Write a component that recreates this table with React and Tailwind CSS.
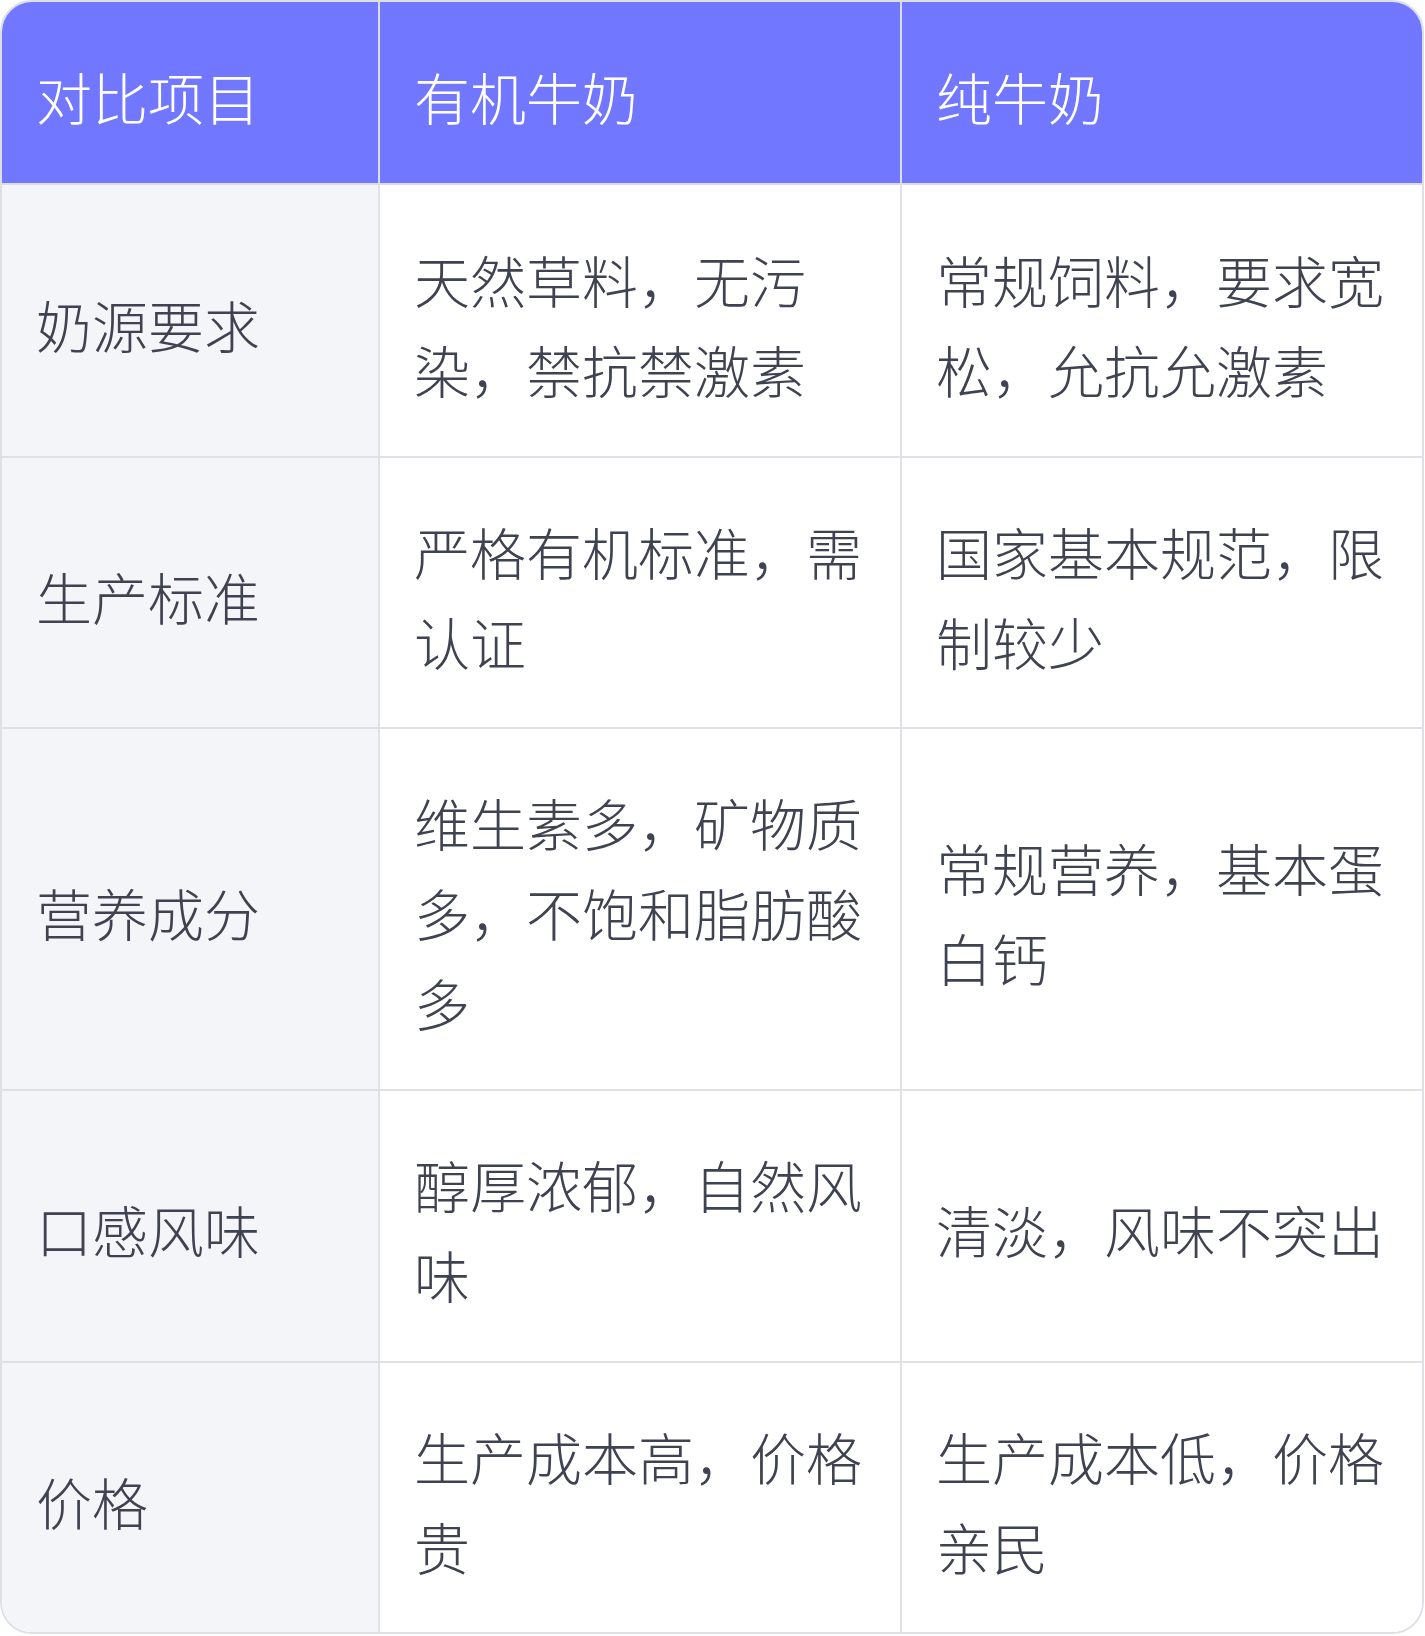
import React from "react";

const rows = [
  ["奶源要求", "天然草料，无污染，禁抗禁激素", "常规饲料，要求宽松，允抗允激素"],
  ["生产标准", "严格有机标准，需认证", "国家基本规范，限制较少"],
  ["营养成分", "维生素多，矿物质多，不饱和脂肪酸多", "常规营养，基本蛋白钙"],
  ["口感风味", "醇厚浓郁，自然风味", "清淡，风味不突出"],
  ["价格", "生产成本高，价格贵", "生产成本低，价格亲民"],
];

const header = ["对比项目", "有机牛奶", "纯牛奶"];

const App = () => {
  return (
    <div className="w-[1425px] h-[1636px] bg-white font-['Noto_Sans_CJK_SC','Noto_Sans',sans-serif] font-light">
      <div className="w-[1424px] h-[1634px] border-2 border-[#dfe0e6] rounded-[32px] overflow-hidden grid grid-cols-[378px_522px_1fr] grid-rows-[183px_273px_271px_362px_272px_1fr]">
        {header.map((h, i) => (
          <div
            key={h}
            className={`bg-[#7177ff] text-white text-[56px] leading-[90px] pl-[34px] pr-[30px] pt-[6px] flex items-center border-b-2 border-[#dcdde4] ${
              i < 2 ? "border-r-2" : ""
            }`}
          >
            {h}
          </div>
        ))}
        {rows.map((row, r) =>
          row.map((cell, c) => (
            <div
              key={r + "-" + c}
              className={`text-[#3f4250] text-[56px] leading-[90px] pl-[34px] pr-[30px] pt-[6px] flex items-center border-[#e0e1e6] ${
                c === 0 ? "bg-[#f4f5f9]" : "bg-white"
              } ${c < 2 ? "border-r-2" : ""} ${r < rows.length - 1 ? "border-b-2" : ""}`}
            >
              <span>{cell}</span>
            </div>
          ))
        )}
      </div>
    </div>
  );
};

export default App;
